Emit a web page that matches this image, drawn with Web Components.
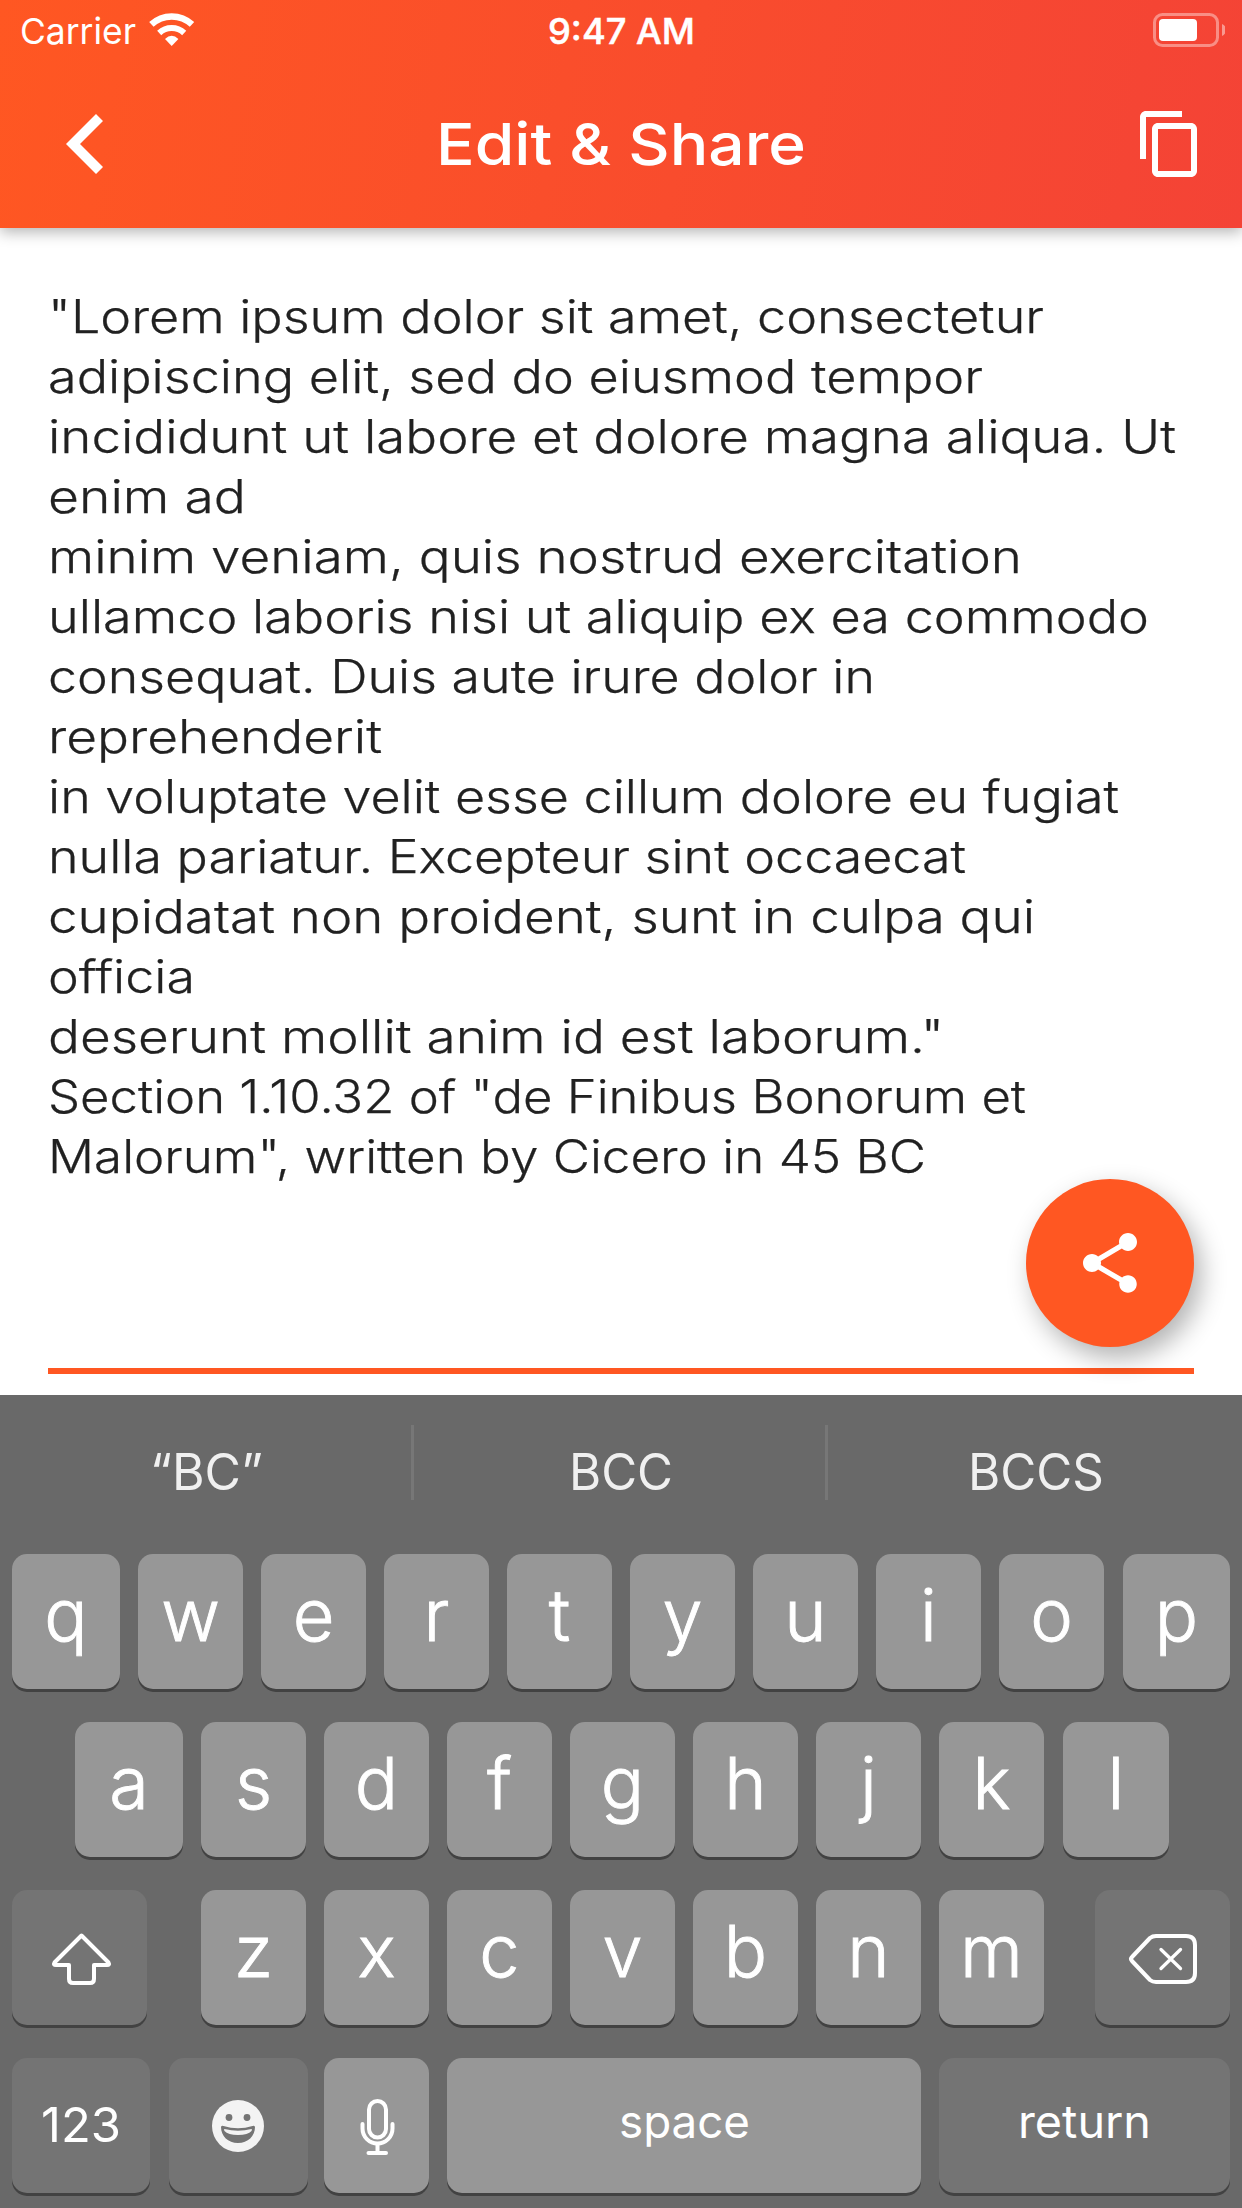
<!DOCTYPE html>
<html lang="en">
<head>
<meta charset="utf-8">
<title>Edit &amp; Share</title>
<style>
html,body{margin:0;padding:0;background:#fff}
body{width:1242px;height:2208px;overflow:hidden;font-family:Inter,"Liberation Sans",sans-serif}
</style>
</head>
<body>
<edit-share-app></edit-share-app>
<script>
const define = (name, html, setup) => {
  const t = document.createElement('template');
  t.innerHTML = html;
  customElements.define(name, class extends HTMLElement {
    connectedCallback() {
      if (this.shadowRoot) return;
      this.attachShadow({mode: 'open'}).append(t.content.cloneNode(true));
      if (setup) setup(this, this.shadowRoot);
    }
  });
};

/* Text stretched horizontally to an exact advance width. */
define('fit-text', `<style>
:host{display:block;white-space:nowrap}
span{display:inline-block;transform-origin:0 50%}
</style><span><slot></slot></span>`, (host, root) => {
  const w = parseFloat(host.getAttribute('w'));
  const span = root.querySelector('span');
  host.style.width = w + 'px';
  span.style.transform = 'scaleX(' + w / span.getBoundingClientRect().width + ')';
});

define('status-bar', `<style>
:host{display:flex;justify-content:space-between;height:60px;padding:0 17px 0 20px;font-size:36px;line-height:62px;color:#fff}
.side{display:flex;width:259px}
.end{justify-content:flex-end}
.time{font-weight:500;-webkit-text-stroke:.5px #fff;margin-right:2px}
svg{display:block;height:60px}
</style>
<div class="side"><fit-text w="116">Carrier</fit-text>
<svg width="60" height="60" viewBox="136 0 60 60" fill="none" stroke="#fff">
<path d="M151.400 24.400A29.800 29.800 0 0 1 192 24.400" stroke-width="6.500"/>
<path d="M159.200 33A18.300 18.300 0 0 1 184.200 33" stroke-width="6"/>
<path d="M165 39Q171.700 32.500 178.400 39L171.700 46Z" fill="#fff" stroke="none"/></svg></div>
<fit-text w="147" class="time">9:47 AM</fit-text>
<div class="side end"><svg width="74" height="60" viewBox="1151 0 74 60">
<rect x="1154.500" y="14.500" width="63" height="31" rx="8" fill="none" stroke="#fff" stroke-opacity=".4" stroke-width="3"/>
<rect x="1159" y="19" width="38" height="22" rx="4" fill="#fff"/>
<path d="M1222 24Q1226.300 26 1226 30Q1226 34 1222 36Z" fill="#fff" fill-opacity=".45"/></svg></div>`);

define('nav-bar', `<style>
:host{display:flex;justify-content:space-between;align-items:flex-start;height:168px;padding:0 36px 0 54px;color:#fff}
svg{display:block;fill:#fff}
.title{font-size:58px;line-height:168px;font-weight:450}
.back{padding-top:48px;width:60px;margin-right:-6px}
.copy{padding-top:48px}
</style>
<div class="back"><svg width="60" height="72" viewBox="54 108 60 72"><path d="M66 144L96 114L103 121L80 144L103 167L96 174Z"/></svg></div>
<div class="title"><fit-text w="370"><slot></slot></fit-text></div>
<div class="copy"><svg width="72" height="72" viewBox="0 0 24 24"><path d="M16 1H4c-1.100 0-2 .9-2 2v14h2V3h12V1zm3 4H8c-1.100 0-2 .9-2 2v14c0 1.100.9 2 2 2h11c1.100 0 2-.9 2-2V7c0-1.100-.9-2-2-2zm0 16H8V7h11v14z"/></svg></div>`);

define('app-header', `<style>
:host{display:block;height:228px;background:linear-gradient(100.400deg,#ff5722,#f44336);box-shadow:0 4px 14px rgba(0,0,0,.3);position:relative}
</style><status-bar></status-bar><nav-bar><slot></slot></nav-bar>`);

define('share-button', `<style>
:host{display:flex;align-items:center;justify-content:center;width:168px;height:168px;border-radius:50%;background:#ff5722;box-shadow:7px 11px 26px rgba(0,0,0,.3)}
svg{fill:#fff}
</style><svg width="72" height="72" viewBox="0 0 24 24"><path d="M18 16.080c-.76 0-1.440.3-1.960.77L8.910 12.700c.05-.23.09-.46.09-.7s-.04-.47-.09-.7l7.050-4.110c.54.5 1.250.81 2.040.81 1.660 0 3-1.340 3-3s-1.340-3-3-3-3 1.340-3 3c0 .24.04.47.09.7L8.040 9.810C7.500 9.310 6.790 9 6 9c-1.660 0-3 1.340-3 3s1.340 3 3 3c.79 0 1.500-.31 2.040-.81l7.120 4.160c-.05.21-.08.43-.08.65 0 1.610 1.310 2.920 2.920 2.920 1.610 0 2.920-1.310 2.920-2.920s-1.310-2.920-2.920-2.920z"/></svg>`);

define('text-editor', `<style>
:host{display:block;box-sizing:border-box;height:1167px;padding:58px 48px 21px;position:relative}
.field{box-sizing:border-box;height:1088px;border-bottom:6px solid #ff5722;font-size:46px;line-height:60px;font-weight:300;-webkit-text-stroke:.25px #212121;color:#212121}
share-button{position:absolute;right:48px;bottom:48px}
</style><div class="field"><slot></slot></div><share-button></share-button>`);

define('suggestion-bar', `<style>
:host{display:grid;grid-template-columns:411px 3px 411px 3px 414px;height:159px;font-size:50px;line-height:154px;color:#f0f0f0}
.cell{display:flex;justify-content:center;padding-left:2px}
i{height:75px;margin-top:30px;background:#777}
</style><div class="cell"><fit-text w="113">“BC”</fit-text></div><i></i><div class="cell"><fit-text w="104">BCC</fit-text></div><i></i><div class="cell"><fit-text w="136">BCCS</fit-text></div>`);

define('kbd-key', `<style>
:host{display:flex;justify-content:center;flex:none;box-sizing:border-box;width:105px;height:135px;border-radius:15px;background:#979797;box-shadow:0 3px 0 #424242;color:#fff;font-size:72px;line-height:121.500px;font-weight:300;-webkit-text-stroke:.9px #fff}
:host([dark]){background:#747474}
:host([label]){font-size:46px;line-height:127px;font-weight:400;-webkit-text-stroke:0}
</style><slot></slot>`, host => {
  if (host.hasAttribute('w')) host.style.width = host.getAttribute('w') + 'px';
});

define('ios-keyboard', `<style>
:host{display:block;height:813px;background:#696969}
.rows{display:flex;flex-direction:column;gap:33px;padding:0 12px}
.row{display:flex;gap:18px}
svg{display:block;width:100%;height:135px}
</style><suggestion-bar></suggestion-bar>
<div class="rows">
<div class="row"><kbd-key w="108">q</kbd-key><kbd-key>w</kbd-key><kbd-key>e</kbd-key><kbd-key>r</kbd-key><kbd-key>t</kbd-key><kbd-key>y</kbd-key><kbd-key>u</kbd-key><kbd-key>i</kbd-key><kbd-key>o</kbd-key><kbd-key w="107" style="margin-left:1px">p</kbd-key></div>
<div class="row" style="padding-left:63px"><kbd-key w="108">a</kbd-key><kbd-key>s</kbd-key><kbd-key>d</kbd-key><kbd-key>f</kbd-key><kbd-key>g</kbd-key><kbd-key>h</kbd-key><kbd-key>j</kbd-key><kbd-key>k</kbd-key><kbd-key w="106" style="margin-left:1px">l</kbd-key></div>
<div class="row"><kbd-key dark w="135" style="margin-right:36px"><svg viewBox="12 1890 135 135" fill="none" stroke="#fff" stroke-width="4" stroke-linejoin="round"><path d="M81.500 1935.500L54.500 1962.500Q53 1965 56 1965H69V1979Q69 1983 73 1983H90Q94 1983 94 1979V1965H107Q110 1965 108.500 1962.500Z"/></svg></kbd-key><kbd-key>z</kbd-key><kbd-key>x</kbd-key><kbd-key>c</kbd-key><kbd-key>v</kbd-key><kbd-key>b</kbd-key><kbd-key>n</kbd-key><kbd-key>m</kbd-key><kbd-key dark w="135" style="margin-left:33px"><svg viewBox="1095 1890 135 135" fill="none" stroke="#fff" stroke-width="4" stroke-linecap="round" stroke-linejoin="round"><path d="M1132 1957L1150 1938Q1152.500 1936 1156 1936H1186Q1195 1936 1195 1945V1973Q1195 1982 1186 1982H1156Q1152.500 1982 1150 1980L1132 1961Q1130 1959 1132 1957Z"/><path d="M1161 1949.500L1180.500 1968.500M1180.500 1949.500L1161 1968.500" stroke-width="3.300"/></svg></kbd-key></div>
<div class="row"><kbd-key dark label w="138" style="font-size:48px;line-height:133px;margin-right:1px"><fit-text w="80">123</fit-text></kbd-key><kbd-key dark w="139" style="margin-right:-2px"><svg viewBox="169 2058 139 135"><circle cx="238" cy="2126" r="26" fill="#f3f3f3"/><circle cx="229" cy="2117.500" r="3.400" fill="#747474"/><circle cx="247" cy="2117.500" r="3.400" fill="#747474"/><path d="M221 2127Q221.500 2125.300 223.500 2126Q238 2130.500 252.500 2126Q254.500 2125.300 255 2127C255 2136 248 2143 238 2143C228 2143 221 2136 221 2127Z" fill="#747474"/><path d="M224.500 2129Q238 2132.500 251.500 2129Q252.500 2129.500 251.500 2131Q248 2135 238 2135Q228 2135 224.500 2131Q223.500 2129.500 224.500 2129Z" fill="#f3f3f3"/></svg></kbd-key><kbd-key><svg viewBox="324 2058 105 135" fill="none" stroke="#fff" stroke-width="4" stroke-linecap="round"><rect x="369" y="2101" width="17" height="36.500" rx="8.500"/><path d="M362.500 2124V2128.500A15 15 0 0 0 392.500 2128.500V2124"/><path d="M377.500 2144V2152"/><path d="M368.500 2153H386"/></svg></kbd-key><kbd-key label w="474"><fit-text w="131">space</fit-text></kbd-key><kbd-key dark label w="291"><fit-text w="133">return</fit-text></kbd-key></div>
</div>`);

define('edit-share-app', `<style>
:host{display:flex;flex-direction:column;width:1242px;height:2208px;background:#fff}
app-header{z-index:1}
</style>
<app-header>Edit &amp; Share</app-header>
<text-editor>
<fit-text w="996">"Lorem ipsum dolor sit amet, consectetur</fit-text>
<fit-text w="935">adipiscing elit, sed do eiusmod tempor</fit-text>
<fit-text w="1128">incididunt ut labore et dolore magna aliqua. Ut</fit-text>
<fit-text w="198">enim ad</fit-text>
<fit-text w="974">minim veniam, quis nostrud exercitation</fit-text>
<fit-text w="1101">ullamco laboris nisi ut aliquip ex ea commodo</fit-text>
<fit-text w="827">consequat. Duis aute irure dolor in</fit-text>
<fit-text w="334">reprehenderit</fit-text>
<fit-text w="1071">in voluptate velit esse cillum dolore eu fugiat</fit-text>
<fit-text w="918">nulla pariatur. Excepteur sint occaecat</fit-text>
<fit-text w="987">cupidatat non proident, sunt in culpa qui</fit-text>
<fit-text w="147">officia</fit-text>
<fit-text w="896">deserunt mollit anim id est laborum."</fit-text>
<fit-text w="978">Section 1.10.32 of "de Finibus Bonorum et</fit-text>
<fit-text w="878">Malorum", written by Cicero in 45 BC</fit-text>
</text-editor>
<ios-keyboard></ios-keyboard>`);
</script>
</body>
</html>
